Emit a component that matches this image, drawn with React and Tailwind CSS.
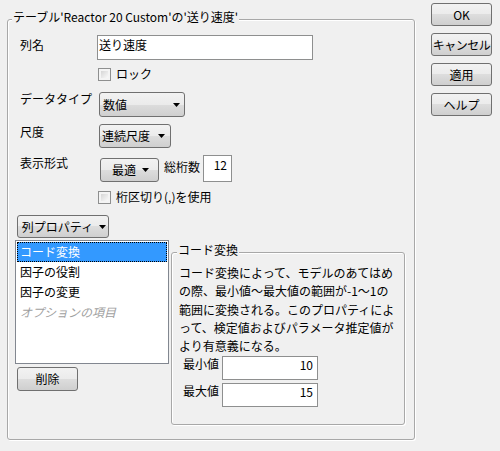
import React from "react";

const btnBg =
  "bg-[linear-gradient(to_bottom,#f2f2f2_0%,#ebebeb_50%,#dddddd_50%,#cfcfcf_100%)]";

function Arrow() {
  return (
    <svg width="7" height="4" viewBox="0 0 7 4" className="shrink-0">
      <path d="M0 0 H7 L3.5 4 Z" fill="#000" />
    </svg>
  );
}

function Checkbox({ label }) {
  return (
    <div className="flex items-center h-[18px] leading-[18px]">
      <div className="w-[13px] h-[13px] border border-[#8e8f8f] bg-[#f4f4f4] p-[2px] shrink-0">
        <div className="w-full h-full bg-[linear-gradient(135deg,#d6d6d6,#f9f9f9)]" />
      </div>
      <span className="ml-[5px] whitespace-nowrap">{label}</span>
    </div>
  );
}

function Button({ children, className = "" }) {
  return (
    <div
      className={`flex items-center justify-center border border-[#707070] rounded-[3px] ${btnBg} whitespace-nowrap leading-[18px] ${className}`}
    >
      {children}
    </div>
  );
}

export default function App() {
  return (
    <div className="w-[500px] h-[451px] bg-[#f0f0f0] flex items-start text-[12px] text-black font-['Noto_Sans_CJK_JP','Noto_Sans',sans-serif] leading-[18px] overflow-hidden">
      {/* Main group */}
      <div className="relative ml-[7px] mt-[19px] w-[408px] h-[421px] border border-[#a8a8a8] rounded-[3px] shadow-[inset_1px_1px_0_#ffffff,1px_1px_0_#ffffff] flex flex-col pl-[7px] pt-[15px] shrink-0">
        <div className="absolute top-[-12px] left-[4px] px-[1px] bg-[#f0f0f0] whitespace-nowrap leading-[18px]">
          テーブル'Reactor 20 Custom'の'送り速度'
        </div>

        {/* 列名 */}
        <div className="flex items-start pl-[5px]">
          <div className="w-[77px] pt-[1px]">列名</div>
          <div className="w-[216px] h-[25px] border border-[#8e8f8f] bg-white pl-[1px] leading-[18px]">
            送り速度
          </div>
        </div>

        {/* ロック */}
        <div className="mt-[5px] ml-[83px]">
          <Checkbox label="ロック" />
        </div>

        {/* データタイプ */}
        <div className="flex items-start pl-[5px] mt-[9px]">
          <div className="w-[79px] mt-[-2px]">データタイプ</div>
          <Button className="w-[86px] h-[25px] !justify-between pl-[3px] pr-[4px]">
            <span>数値</span>
            <Arrow />
          </Button>
        </div>

        {/* 尺度 */}
        <div className="flex items-start pl-[5px] mt-[7px]">
          <div className="w-[79px] mt-[-1px]">尺度</div>
          <Button className="w-[72px] h-[24px] !justify-between pl-[2px] pr-[5px]">
            <span>連続尺度</span>
            <Arrow />
          </Button>
        </div>

        {/* 表示形式 */}
        <div className="flex items-start pl-[5px] mt-[6px]">
          <div className="w-[80px]">表示形式</div>
          <Button className="w-[59px] h-[24px] mt-[4px] gap-[6px] pl-[2px]">
            <span>最適</span>
            <Arrow />
          </Button>
          <div className="ml-[5px] mt-[4px]">総桁数</div>
          <div className="ml-[3px] mt-[1px] w-[29px] h-[27px] border border-[#8e8f8f] bg-white text-right pr-[4px] leading-[18px]">
            12
          </div>
        </div>

        {/* 桁区切り */}
        <div className="mt-[6px] ml-[83px]">
          <Checkbox label="桁区切り(,)を使用" />
        </div>

        {/* 列プロパティ */}
        <div className="mt-[9px] ml-[2px]">
          <Button className="w-[92px] h-[23px] gap-[6px] pl-[2px]">
            <span>列プロパティ</span>
            <Arrow />
          </Button>
        </div>

        {/* Bottom section */}
        <div className="flex items-start mt-[2px]">
          <div className="flex flex-col">
            <div className="w-[154px] h-[124px] border border-[#828790] bg-white p-[1px] flex flex-col">
              <div className="h-[20px] bg-[#3399ff] text-white border border-dotted border-black pl-[2px] leading-[18px]">
                コード変換
              </div>
              <div className="h-[20px] pl-[3px] leading-[20px]">因子の役割</div>
              <div className="h-[20px] pl-[3px] leading-[20px]">因子の変更</div>
              <div className="h-[20px] pl-[3px] leading-[20px] italic text-[#a0a0a0]">
                オプションの項目
              </div>
            </div>
            <Button className="mt-[3px] ml-[2px] w-[61px] h-[24px]">削除</Button>
          </div>

          <div className="relative ml-[2px] mt-[12px] w-[234px] h-[173px] border border-[#a8a8a8] rounded-[3px] shadow-[inset_1px_1px_0_#ffffff,1px_1px_0_#ffffff] pl-[7px] pt-[11px] flex flex-col">
            <div className="absolute top-[-12px] left-[5px] px-[1px] bg-[#f0f0f0] whitespace-nowrap">
              コード変換
            </div>
            <div className="leading-[18.35px] whitespace-nowrap">
              <div>コード変換によって、モデルのあてはめ</div>
              <div>の際、最小値～最大値の範囲が-1～1の</div>
              <div>範囲に変換される。このプロパティによ</div>
              <div>って、検定値およびパラメータ推定値が</div>
              <div>より有意義になる。</div>
            </div>
            <div className="flex items-start ml-[4px]">
              <div className="w-[39px] leading-[14px] mt-[1px]">最小値</div>
              <div className="w-[96px] h-[24px] border border-[#8e8f8f] bg-white text-right pr-[4px] leading-[14px] pt-[1px]">
                10
              </div>
            </div>
            <div className="flex items-start ml-[4px] mt-[3px]">
              <div className="w-[39px] leading-[14px] mt-[1px]">最大値</div>
              <div className="w-[96px] h-[24px] border border-[#8e8f8f] bg-white text-right pr-[4px] leading-[14px] pt-[1px]">
                15
              </div>
            </div>
          </div>
        </div>
      </div>

      {/* Right buttons */}
      <div className="ml-[16px] mt-[3px] flex flex-col gap-[7px] w-[61px] shrink-0">
        <Button className="h-[23px]">OK</Button>
        <Button className="h-[23px] tracking-[-0.5px]">キャンセル</Button>
        <Button className="h-[23px]">適用</Button>
        <Button className="h-[23px]">ヘルプ</Button>
      </div>
    </div>
  );
}
